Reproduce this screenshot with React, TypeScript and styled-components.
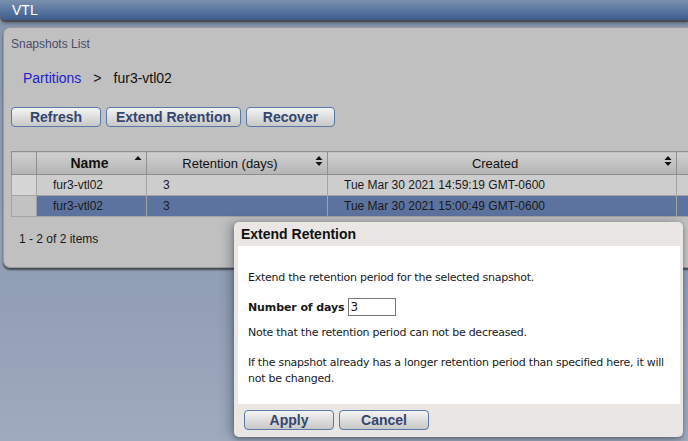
import React from "react";
import styled, { createGlobalStyle } from "styled-components";

const Global = createGlobalStyle`
  html, body { margin: 0; padding: 0; }
  body {
    font-family: "Liberation Sans", Arial, sans-serif;
    background: linear-gradient(180deg, #8596ae 0%, #93a0b6 70%, #9eaabd 100%);
    min-height: 441px;
    overflow: hidden;
  }
`;

const Page = styled.div`
  position: relative;
  width: 688px;
  height: 441px;
  overflow: hidden;
`;

const TitleBar = styled.div`
  height: 20px;
  background: linear-gradient(180deg, #7a90ae 0%, #5b77a0 50%, #3c5c8e 100%);
  border-bottom-left-radius: 6px;
  box-shadow: 0 2px 1px #4a4a4a, 0 4px 3px rgba(0,0,0,0.25);
  color: #fff;
  font-size: 14px;
  line-height: 20px;
  padding-left: 12px;
`;

const Panel = styled.div`
  margin: 7px -12px 0 3px;
  height: 239px;
  background: #c0c0c0;
  border: 1px solid #9a9a9a;
  border-radius: 7px;
  box-shadow: 0 2px 2px rgba(0,0,0,0.55);
  padding: 0 0 0 7px;
  display: flex;
  flex-direction: column;
`;

const PanelTitle = styled.div`
  font-size: 12px;
  color: #4b4b6b;
  margin-top: 9px;
  height: 15px;
`;

const Crumbs = styled.div`
  display: flex;
  align-items: center;
  gap: 12px;
  margin: 18px 0 0 12px;
  font-size: 14px;
  color: #111;
  height: 16px;
`;

const CrumbLink = styled.span`
  color: #2020d0;
`;

const Toolbar = styled.div`
  display: flex;
  gap: 5px;
  margin-top: 21px;
`;

const Btn = styled.button<{ $w: number }>`
  width: ${(p) => p.$w}px;
  height: 20px;
  padding: 0;
  border: 1px solid #5a78a8;
  border-radius: 4px;
  background: linear-gradient(180deg, #f4f4f4 0%, #dedede 50%, #c8c8c8 100%);
  color: #34466e;
  font-family: "Liberation Sans", Arial, sans-serif;
  font-weight: bold;
  font-size: 14px;
  line-height: 18px;
`;

const Table = styled.table`
  margin-top: 24px;
  border-collapse: collapse;
  table-layout: fixed;
  width: 705px;
  font-size: 12px;
  color: #1a1a1a;
`;

const Col = styled.col<{ $w: number }>`
  width: ${(p) => p.$w}px;
`;

const Th = styled.th<{ $bold?: boolean; $pr?: number }>`
  height: 22px;
  padding: 0 ${(p) => p.$pr ?? 0}px 0 0;
  border: 1px solid #8f8f8f;
  background: linear-gradient(180deg, #cfcfcf 0%, #c4c4c4 45%, #b4b4b4 100%);
  font-weight: ${(p) => (p.$bold ? "bold" : "normal")};
  font-size: ${(p) => (p.$bold ? 14 : 13)}px;
  color: #111;
  text-align: center;
  position: relative;
`;

const SortIcon = styled.svg`
  position: absolute;
  right: 4px;
  top: 4px;
`;

const Tr = styled.tr<{ $sel?: boolean }>`
  height: 21px;
  background: ${(p) => (p.$sel ? "#5d739f" : "#cdcdcd")};
`;

const Td = styled.td`
  padding: 0 0 0 16px;
  border: 1px solid #a3a3a3;
  text-align: left;
  white-space: nowrap;
  overflow: hidden;
`;

const SelCell = styled.td<{ $sel?: boolean }>`
  padding: 0;
  border: 1px solid #a3a3a3;
  background: ${(p) => (p.$sel ? "#c2c2c2" : "#d6d6d6")};
`;

const Footer = styled.div`
  margin: 15px 0 0 8px;
  font-size: 12px;
  color: #1a1a1a;
`;

const Dialog = styled.div`
  position: absolute;
  left: 234px;
  top: 222px;
  width: 449px;
  height: 215px;
  background: #e9e6e4;
  border-radius: 5px;
  box-shadow: -4px 0 12px rgba(40,50,70,0.35), 0 2px 4px rgba(0,0,0,0.3);
  display: flex;
  flex-direction: column;
  padding: 0 3px 0 4px;
  box-sizing: border-box;
`;

const DialogTitle = styled.div`
  height: 24px;
  line-height: 24px;
  padding-left: 3px;
  font-size: 14px;
  font-weight: bold;
  color: #111;
`;

const DialogBody = styled.div`
  background: #fff;
  height: 158px;
  padding: 24px 8px 0 10px;
  box-sizing: border-box;
  font-family: "DejaVu Sans", Tahoma, sans-serif;
  font-size: 11px;
  letter-spacing: -0.25px;
  color: #1a1a1a;
`;

const P = styled.p<{ $mt: number }>`
  margin: ${(p) => p.$mt}px 0 0 0;
  line-height: 16px;
`;

const Field = styled.div`
  margin-top: 12px;
  display: flex;
  align-items: center;
  gap: 3px;
`;

const Label = styled.span`
  font-weight: bold;
  letter-spacing: -0.1px;
`;

const Input = styled.div`
  width: 44px;
  height: 16px;
  border: 1px solid #777;
  padding-left: 2px;
  line-height: 16px;
  font-size: 12px;
`;

const DialogActions = styled.div`
  display: flex;
  gap: 5px;
  padding: 6px 0 0 6px;
`;

const Sorter = ({ both }: { both?: boolean }) => (
  <SortIcon width="8" height="10" viewBox="0 0 8 10">
    <path d="M4 0 L7.5 4 L0.5 4 Z" fill="#111" />
    {both && <path d="M4 10 L7.5 6 L0.5 6 Z" fill="#111" />}
  </SortIcon>
);

export default function App() {
  return (
    <Page>
      <Global />
      <TitleBar>VTL</TitleBar>
      <Panel>
        <PanelTitle>Snapshots List</PanelTitle>
        <Crumbs>
          <CrumbLink>Partitions</CrumbLink>
          <span>&gt;</span>
          <span>fur3-vtl02</span>
        </Crumbs>
        <Toolbar>
          <Btn $w={90}>Refresh</Btn>
          <Btn $w={135}>Extend Retention</Btn>
          <Btn $w={89}>Recover</Btn>
        </Toolbar>
        <Table>
          <colgroup>
            <Col $w={25} />
            <Col $w={110} />
            <Col $w={181} />
            <Col $w={349} />
            <Col $w={40} />
          </colgroup>
          <thead>
            <tr>
              <Th />
              <Th $bold $pr={4}>
                Name
                <Sorter />
              </Th>
              <Th $pr={14}>
                Retention (days)
                <Sorter both />
              </Th>
              <Th $pr={14}>
                Created
                <Sorter both />
              </Th>
              <Th />
            </tr>
          </thead>
          <tbody>
            <Tr>
              <SelCell />
              <Td>fur3-vtl02</Td>
              <Td>3</Td>
              <Td>Tue Mar 30 2021 14:59:19 GMT-0600</Td>
              <Td />
            </Tr>
            <Tr $sel>
              <SelCell $sel />
              <Td>fur3-vtl02</Td>
              <Td>3</Td>
              <Td>Tue Mar 30 2021 15:00:49 GMT-0600</Td>
              <Td />
            </Tr>
          </tbody>
        </Table>
        <Footer>1 - 2 of 2 items</Footer>
      </Panel>
      <Dialog>
        <DialogTitle>Extend Retention</DialogTitle>
        <DialogBody>
          <P $mt={0}>Extend the retention period for the selected snapshot.</P>
          <Field>
            <Label>Number of days</Label>
            <Input>3</Input>
          </Field>
          <P $mt={9}>Note that the retention period can not be decreased.</P>
          <P $mt={14}>
            If the snapshot already has a longer retention period than specified here, it will not be changed.
          </P>
        </DialogBody>
        <DialogActions>
          <Btn $w={90}>Apply</Btn>
          <Btn $w={90}>Cancel</Btn>
        </DialogActions>
      </Dialog>
    </Page>
  );
}
